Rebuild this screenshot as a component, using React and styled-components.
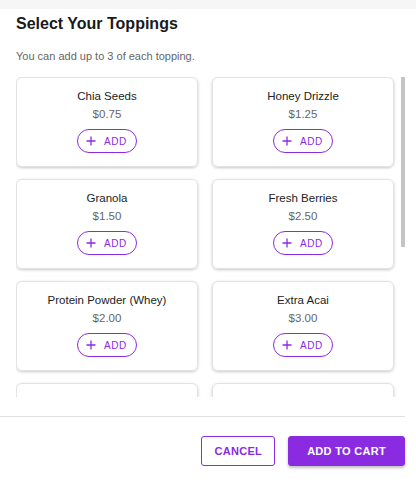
import React, { useState } from "react";
import styled, { createGlobalStyle } from "styled-components";

const GlobalStyle = createGlobalStyle`
  html, body { margin: 0; padding: 0; background: #fff; }
  body { font-family: "Liberation Sans", Arial, sans-serif; }
  * { box-sizing: border-box; }
`;

const toppings = [
  { name: "Chia Seeds", price: 0.75 },
  { name: "Honey Drizzle", price: 1.25 },
  { name: "Granola", price: 1.5 },
  { name: "Fresh Berries", price: 2.5 },
  { name: "Protein Powder (Whey)", price: 2.0 },
  { name: "Extra Acai", price: 3.0 },
  { name: "Coconut Flakes", price: 0.5 },
  { name: "Peanut Butter", price: 1.0 },
  { name: "Cacao Nibs", price: 1.0 },
  { name: "Almond Butter", price: 1.5 },
  { name: "Banana Slices", price: 0.75 },
  { name: "Goji Berries", price: 1.75 },
];

const TopStrip = styled.div`
  height: 9px;
  background: #f6f6f6;
`;

const Dialog = styled.div`
  width: 405px;
  background: #fff;
  display: flex;
  flex-direction: column;
`;

const Header = styled.div`
  padding: 5px 16px 0;
`;

const Title = styled.h2`
  margin: 0;
  font-size: 16px;
  font-weight: 700;
  color: #1a1a1a;
  line-height: 20px;
`;

const Subtitle = styled.p`
  margin: 15px 0 0;
  font-size: 11px;
  color: #666;
  line-height: 14px;
`;

const ScrollWrap = styled.div`
  position: relative;
  margin: 14px 0 0 16px;
  height: 320px;
`;

const Scroller = styled.div`
  height: 100%;
  overflow-y: auto;
  padding-right: 8px;
  scrollbar-width: none;
  &::-webkit-scrollbar { display: none; }
`;

const Thumb = styled.div`
  position: absolute;
  right: 0;
  width: 4px;
  background: #c4c4c4;
`;

const Grid = styled.div`
  display: grid;
  grid-template-columns: 182px 182px;
  column-gap: 14px;
  row-gap: 12px;
  padding-bottom: 4px;
`;

const Card = styled.div`
  height: 90px;
  border: 1px solid #e2e2e2;
  border-radius: 6px;
  box-shadow: 0 1px 3px rgba(0, 0, 0, 0.22);
  display: flex;
  flex-direction: column;
  align-items: center;
  padding-top: 11px;
`;

const Name = styled.div`
  font-size: 11.5px;
  color: #222;
  line-height: 14px;
`;

const Price = styled.div`
  margin-top: 4px;
  font-size: 11.5px;
  color: #666;
  line-height: 14px;
`;

const AddButton = styled.button`
  margin-top: 8px;
  height: 24px;
  padding: 0 9px 0 8px;
  display: flex;
  align-items: center;
  gap: 8px;
  border: 1px solid #8a2be2;
  border-radius: 12px;
  background: #fff;
  color: #8a2be2;
  font-family: inherit;
  font-size: 10px;
  letter-spacing: 0.6px;
  cursor: pointer;
`;

const Footer = styled.div`
  margin-top: 19px;
  border-top: 1px solid #e0e0e0;
  padding: 19px 0 29px;
  display: flex;
  justify-content: flex-end;
  gap: 13px;
`;

const ActionButton = styled.button`
  height: 30px;
  padding: 0 ${(p) => (p.$primary ? "18px" : "12px")};
  border-radius: 3px;
  border: 1px solid #8a2be2;
  background: ${(p) => (p.$primary ? "#8a2be2" : "#fff")};
  color: ${(p) => (p.$primary ? "#fff" : "#8a2be2")};
  box-shadow: ${(p) => (p.$primary ? "0 2px 3px rgba(0,0,0,0.25)" : "none")};
  font-family: inherit;
  font-weight: 700;
  font-size: 11px;
  letter-spacing: 0.3px;
  cursor: pointer;
`;

const Plus = () => (
  <svg width="10" height="10" viewBox="0 0 10 10">
    <path d="M5 0.5v9M0.5 5h9" stroke="currentColor" strokeWidth="1.3" />
  </svg>
);

export default function App() {
  const [cart, setCart] = useState({});
  const [bar, setBar] = useState({ top: 0, height: 169 });

  const add = (name) =>
    setCart((s) => ({ ...s, [name]: Math.min((s[name] || 0) + 1, 3) }));

  const measure = (el) => {
    if (!el) return;
    const { scrollTop, scrollHeight, clientHeight } = el;
    const height = (clientHeight * clientHeight) / scrollHeight;
    const top = (scrollTop / (scrollHeight - clientHeight || 1)) * (clientHeight - height);
    if (Math.abs(height - bar.height) > 0.5 || Math.abs(top - bar.top) > 0.5)
      setBar({ top, height });
  };

  return (
    <>
      <GlobalStyle />
      <TopStrip />
      <Dialog>
        <Header>
          <Title>Select Your Toppings</Title>
          <Subtitle>You can add up to 3 of each topping.</Subtitle>
        </Header>

        <ScrollWrap>
          <Scroller ref={measure} onScroll={(e) => measure(e.currentTarget)}>
            <Grid>
              {toppings.map((t) => (
                <Card key={t.name}>
                  <Name>{t.name}</Name>
                  <Price>${t.price.toFixed(2)}</Price>
                  <AddButton onClick={() => add(t.name)}>
                    <Plus /> ADD
                  </AddButton>
                </Card>
              ))}
            </Grid>
          </Scroller>
          <Thumb style={{ top: bar.top, height: bar.height }} />
        </ScrollWrap>

        <Footer>
          <ActionButton>CANCEL</ActionButton>
          <ActionButton $primary>ADD TO CART</ActionButton>
        </Footer>
      </Dialog>
    </>
  );
}
